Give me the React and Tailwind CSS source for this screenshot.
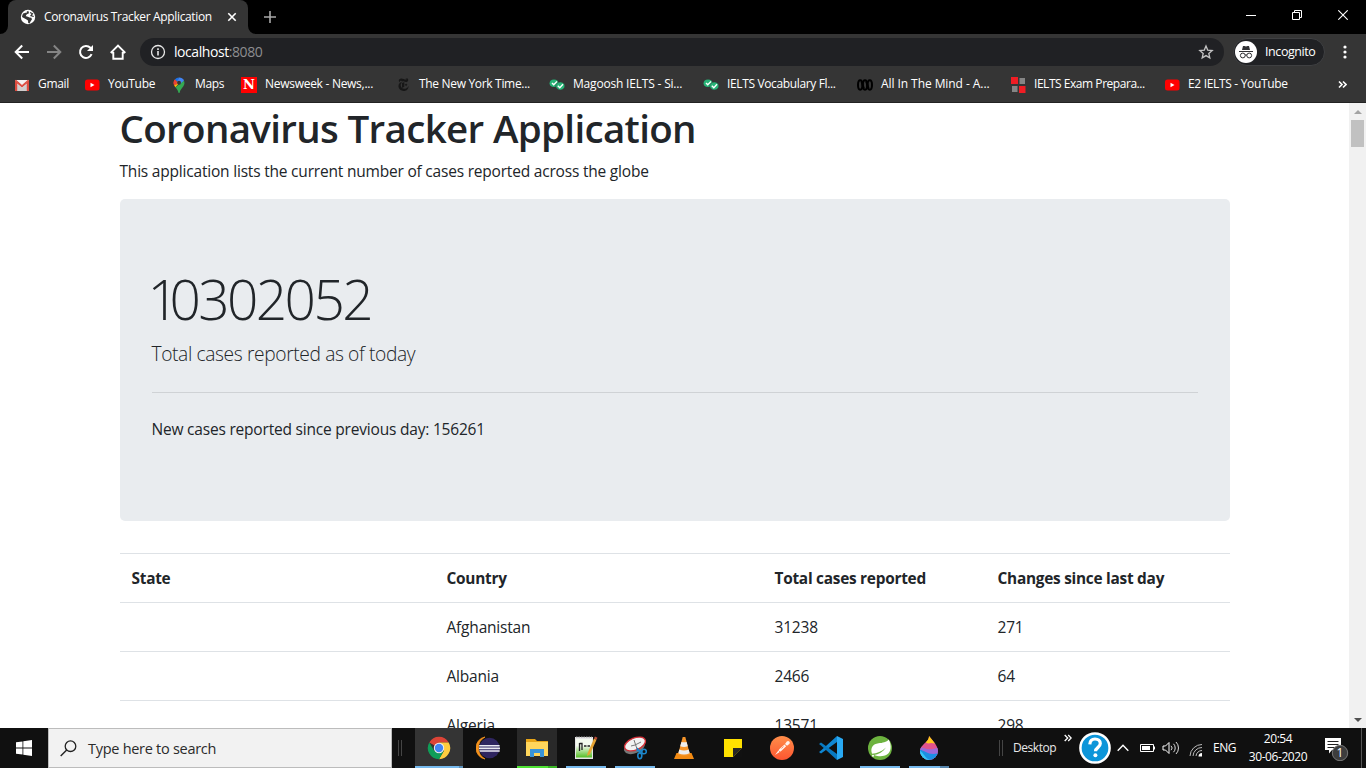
import React from 'react';
import { SiNewyorktimes } from 'react-icons/si';

const Svg = ({ s = 16, box = 16, children, className = '' }) => (
  <svg width={s} height={s} viewBox={`0 0 ${box} ${box}`} fill="none" className={`block shrink-0 ${className}`}>
    {children}
  </svg>
);

/* ---------- bookmark icons ---------- */
const Gmail = () => (
  <Svg>
    <path d="M1 3h14v11H1z" fill="#e8e6e6" />
    <path d="M3 14V7l5 4 5-4v7z" fill="#cfcdcd" />
    <path d="M1 14V3l7 6 7-6v11h-2.2V6.6L8 10.6 3.200 6.600V14z" fill="#dd4b3e" />
    <path d="M2 3h12L8 8z" fill="#f3f0f0" />
    <path d="M1 3.300l1-.5L8 8l6-5.200 1 .5-7 6.300z" fill="#dd4b3e" />
  </Svg>
);
const YouTube = () => (
  <Svg className="-ml-px">
    <rect x="1" y="2.500" width="14.500" height="11" rx="2.500" fill="#f00" />
    <path d="M6.500 5.800v4.400L10.500 8z" fill="#fff" />
  </Svg>
);
const Maps = () => (
  <Svg>
    <path d="M8 .5a5.400 5.400 0 0 0-4.200 2L6.500 5z" fill="#1a73e8" />
    <path d="M3.800 2.500a5.400 5.400 0 0 0-.9 5L6.300 7z" fill="#ea4335" />
    <path d="M8 .5a5.400 5.400 0 0 1 5 3.300L9.500 7.600 6 4.800z" fill="#4285f4" />
    <path d="M2.900 7.500c.3 1 .9 1.800 1.500 2.700L10 4.500 6 4.800z" fill="#fbbc04" />
    <path d="M13 3.800c1.200 3-.2 4.900-1.800 6.900C9.500 12.700 9 14 8.700 15.400c-.2.700-1.100.7-1.300 0C7 13.500 5.800 12 4.400 10.200z" fill="#34a853" />
    <path d="M3.800 2.500 6 4.500 5.800 7.500 3 8c-.9-2.200-.3-4.200.8-5.500z" fill="#ea4335" />
    <circle cx="8" cy="5.800" r="2" fill="#353535" />
  </Svg>
);
const Newsweek = () => (
  <div className="flex size-4 shrink-0 items-center justify-center bg-[#f00] font-['DejaVu_Serif','Liberation_Serif',serif] text-[13px] leading-4 font-bold text-white">N</div>
);
const Times = () => <SiNewyorktimes size={13} color="#171717" className="mx-[1.5px] shrink-0" />;
const Magoosh = () => (
  <Svg>
    <ellipse cx="5" cy="6.300" rx="4.400" ry="3.800" fill="#27b376" />
    <ellipse cx="11.300" cy="9" rx="4.500" ry="4" fill="#27b376" stroke="#353535" strokeWidth=".5" />
    <path d="m3 6 1.700 1.800L8 4.500M8.800 8.800l2 2 3.200-3.500" stroke="#fff" strokeWidth="1.300" />
  </Svg>
);
const Abc = () => (
  <Svg>
    <g stroke="#000" strokeWidth="2">
      <ellipse cx="3.200" cy="8" rx="2.200" ry="4.700" />
      <ellipse cx="8" cy="8" rx="2.200" ry="4.700" />
      <ellipse cx="12.800" cy="8" rx="2.200" ry="4.700" />
      <path d="m4.500 4.500 2.400 7M9.200 4.500l2.400 7" />
    </g>
  </Svg>
);
const IeltsPrep = () => (
  <Svg className="-ml-px">
    <path d="M1 0h7v7H1zM9 9h6.500v7H9z" fill="#f01d24" />
    <path d="M9.500 1H15v6H9.500zM2 9h5.500v6H2z" fill="#858585" />
  </Svg>
);

const bookmarks = [
  { w: 'w-[71px]', icon: <Gmail />, label: 'Gmail' },
  { w: 'w-[86px]', icon: <YouTube />, label: 'YouTube' },
  { w: 'w-[70px]', icon: <Maps />, label: 'Maps' },
  { w: 'w-[154px]', icon: <Newsweek />, label: 'Newsweek - News,...', t: 'tracking-[-0.28px]' },
  { w: 'w-[154px]', icon: <Times />, label: 'The New York Time...' },
  { w: 'w-[154px]', icon: <Magoosh />, label: 'Magoosh IELTS - Si...', t: 'tracking-[-0.19px]' },
  { w: 'w-[154px]', icon: <Magoosh />, label: 'IELTS Vocabulary Fl...', t: 'tracking-[-0.36px]' },
  { w: 'w-[154px]', icon: <Abc />, label: 'All In The Mind - A...', t: 'tracking-[-0.07px]' },
  { w: 'w-[154px]', icon: <IeltsPrep />, label: 'IELTS Exam Prepara...', t: 'tracking-[-0.46px]' },
  { w: 'w-[150px]', icon: <YouTube />, label: 'E2 IELTS - YouTube' },
];

/* ---------- browser frame ---------- */
const TabStrip = () => (
  <div className="flex h-[34px] shrink-0 items-end bg-black">
    <Svg s={8} box={8}><path d="M8 0v8H0a8 8 0 0 0 8-8z" fill="#353535" /></Svg>
    <div className="flex h-[34px] w-[240px] items-center rounded-t-lg bg-[#353535] pl-3 text-white">
      <Svg>
        <circle cx="8" cy="8" r="7.200" fill="#fff" />
        <path d="M8.300 1.800 9 4.300 6.800 5.200 5.500 7l2.300.7 1.700.8 1.800.2.700 1.500-1.300 2-1.200 2.200-1.300-.4-.2-2.500-1.500-1L2 8l.5-2.500z" fill="#353535" />
        <path d="M3.500 4.500 5.500 6 4 8.500M10 3.500l2.500 1.200-1.500 2 2.700.8" stroke="#353535" strokeWidth="1.200" />
        <path d="M6.300 4.200 5 3.200 7 2.400z" fill="#fff" />
      </Svg>
      <span className="ml-2 w-[183px] text-[12px] tracking-[-0.35px]">Coronavirus Tracker Application</span>
      <Svg s={10} box={10}><path d="m1.300 1.300 7.400 7.400m0-7.400L1.300 8.700" stroke="#fff" strokeWidth="1.600" /></Svg>
    </div>
    <Svg s={8} box={8}><path d="M0 0v8h8a8 8 0 0 1-8-8z" fill="#353535" /></Svg>
    <div className="flex h-[34px] flex-1 items-center pl-2">
      <Svg s={12} box={12}><path d="M6 0v12M0 6h12" stroke="#a8a8a8" strokeWidth="1.600" /></Svg>
    </div>
    <div className="flex h-[29px] items-center gap-9 self-start pr-[18px]">
      <Svg s={10} box={10}><path d="M0 5.500h10" stroke="#fff" /></Svg>
      <Svg s={10} box={10}><path d="M.5 2.500h7v7h-7zM2.500 2.500v-2h7v7h-2" stroke="#fff" /></Svg>
      <Svg s={10} box={10}><path d="m.3.3 9.400 9.400m0-9.400L.3 9.700" stroke="#fff" strokeWidth="1.100" /></Svg>
    </div>
  </div>
);

const Toolbar = () => (
  <div className="flex h-[34px] shrink-0 items-center bg-[#353535] pt-[2px] pl-[14px] text-white">
    <Svg><path d="M15 8H2m6.200-6.500L1.700 8l6.500 6.500" stroke="#fff" strokeWidth="2" /></Svg>
    <Svg className="ml-4"><path d="M1 8h13M7.800 1.500 14.300 8l-6.500 6.500" stroke="#858585" strokeWidth="2" /></Svg>
    <Svg className="ml-4"><path d="M13.600 10.200A6 6 0 1 1 12.400 3.800L14 5.400" stroke="#fff" strokeWidth="2" /><path d="M15 1v6H9z" fill="#fff" /></Svg>
    <Svg className="ml-4"><path d="M3.300 8v6.800h9.400V8M.7 8.800 8 1.500l7.300 7.300M1 8.500h2.500M12.500 8.500H15" stroke="#fff" strokeWidth="1.900" /></Svg>
    <div className="ml-[14px] flex h-7 w-[1084px] items-center rounded-full bg-[#202124] pr-[10px] pl-[10px]">
      <Svg><circle cx="8" cy="8" r="6.500" stroke="#e8e8e8" strokeWidth="1.300" /><path d="M8 7v4.500M8 4.300v1.600" stroke="#e8e8e8" strokeWidth="1.600" /></Svg>
      <span className="ml-2 flex-1 pb-px text-[14px] tracking-[-0.43px]">localhost<span className="text-[#8d8e90]">:8080</span></span>
      <Svg><path d="m8 1.900 1.700 4.200 4.500.4-3.400 3 1 4.400L8 11.600l-3.800 2.300 1-4.400-3.400-3 4.500-.4z" stroke="#c4c4c4" strokeWidth="1.300" /></Svg>
    </div>
    <div className="ml-[9px] flex h-7 w-[92px] items-center rounded-full border border-[#3f4042] bg-[#202124] pl-px">
      <Svg s={22} box={22}>
        <circle cx="11" cy="11" r="11" fill="#fff" />
        <path d="M7 9 8 5h1.500L11 5.500 12.500 5H14l1 4zM4 10h14v1H4z" fill="#303134" />
        <circle cx="7.800" cy="14.500" r="2.400" stroke="#303134" /><circle cx="14.200" cy="14.500" r="2.400" stroke="#303134" /><path d="M10 14h2" stroke="#303134" />
      </Svg>
      <span className="ml-[8px] text-[12.5px] tracking-[-0.42px]">Incognito</span>
    </div>
    <Svg className="ml-[12px]"><g fill="#fff"><circle cx="8" cy="3" r="1.600" /><circle cx="8" cy="8" r="1.600" /><circle cx="8" cy="13" r="1.600" /></g></Svg>
  </div>
);

const BookmarkBar = () => (
  <div className="flex h-[35px] shrink-0 items-center border-b border-[#232323] bg-[#353535] pb-px pl-[14px] text-[12px] text-white">
    {bookmarks.map((b, i) => (
      <div key={i} className={`flex shrink-0 items-center gap-2 whitespace-nowrap ${b.w}`}>
        {b.icon}
        <span className={`pb-px ${b.t || 'tracking-[-0.32px]'}`}>{b.label}</span>
      </div>
    ))}
    <Svg s={9} box={9} className="ml-[23px]"><path d="m1 1.500 3 3-3 3m4-6 3 3-3 3" stroke="#fff" strokeWidth="1.600" /></Svg>
  </div>
);

/* ---------- page ---------- */
const rows = [
  ['', 'Afghanistan', '31238', '271'],
  ['', 'Albania', '2466', '64'],
  ['', 'Algeria', '13571', '298'],
];

const Page = () => (
  <div className="flex min-h-0 flex-1 overflow-hidden bg-white">
    <main className="flex-1 pr-[119.5px] pl-[119.5px] text-[15.5px] leading-6 tracking-[-0.2px] text-[#212529]">
      <h1 className="mb-2 pt-0.5 text-[38.5px] leading-[46px] font-semibold tracking-[-0.66px] whitespace-nowrap">Coronavirus Tracker Application</h1>
      <p className="mb-4">This application lists the current number of cases reported across the globe</p>
      <section className="mb-8 h-[322px] rounded-[5px] bg-[#e9ecef] px-8 py-16">
        <h1 className="-ml-1 mb-2 h-[67px] text-[55px] leading-[71px] font-light"><span className="tracking-[-9.5px]">1</span><span className="tracking-[-2.6px]">0302052</span></h1>
        <p className="text-[19.2px] leading-[32px] font-light tracking-[-0.37px]">Total cases reported as of today</p>
        <hr className="mt-[22px] mb-6 border-t border-[#cfd2d5]" />
        <p>New cases reported since previous day: 156261</p>
      </section>
      <table className="w-[1110px] table-fixed border-collapse text-left">
        <colgroup>
          <col className="w-[315px]" /><col className="w-[328px]" /><col className="w-[223px]" /><col className="w-[244px]" />
        </colgroup>
        <thead>
          <tr className="h-[49px] border-t border-[#dee2e6] text-[15.4px] tracking-[-0.26px]">
            {['State', 'Country', 'Total cases reported', 'Changes since last day'].map((h) => (
              <th key={h} className="px-3 pt-0.5 font-bold">{h}</th>
            ))}
          </tr>
        </thead>
        <tbody>
          {rows.map((r) => (
            <tr key={r[1]} className="h-[49px] border-t border-[#dee2e6]">
              {r.map((c, i) => <td key={i} className="px-3">{c}</td>)}
            </tr>
          ))}
        </tbody>
      </table>
    </main>
    <div className="flex w-[17px] shrink-0 flex-col items-center bg-[#f1f1f1]">
      <div className="flex h-[17px] items-center"><Svg s={8} box={8}><path d="m0 6 4-4 4 4z" fill="#a3a3a3" /></Svg></div>
      <div className="h-[27px] w-[13px] bg-[#c1c1c1]" />
      <div className="mt-auto flex h-[17px] items-center"><Svg s={8} box={8}><path d="m0 2 4 4 4-4z" fill="#505050" /></Svg></div>
    </div>
  </div>
);

/* ---------- taskbar ---------- */
const Chrome = () => (
  <Svg s={24} box={24}>
    <path d="M12 12 2.300 6.400A11.200 11.200 0 0 1 21.700 6.400H12z" fill="#db4437" />
    <path d="M12 6.400h9.700A11.200 11.200 0 0 1 12 23.200l4.900-8.400z" fill="#ffcd40" />
    <path d="M2.300 6.400 7.200 14.800 12 17.600l4.900-2.800L12 23.200A11.200 11.200 0 0 1 2.300 6.400z" fill="#0f9d58" />
    <circle cx="12" cy="12" r="5.200" fill="#f1f1f1" /><circle cx="12" cy="12" r="4.200" fill="#4285f4" />
  </Svg>
);
const Eclipse = () => (
  <Svg s={24} box={24}>
    <path d="M9 1A11.200 11.200 0 0 0 9 23 12.500 12.500 0 0 1 9 1z" fill="#f7941e" stroke="#f7941e" strokeWidth=".8" />
    <circle cx="13.500" cy="12" r="10.300" fill="#2f2560" />
    <path d="M3.200 9h20.400v1.600H3zM3 11.600h21v1.600H3zM3.200 14.200h20.500V15.800H3.700z" fill="#eceaf3" />
  </Svg>
);
const Explorer = () => (
  <Svg s={24} box={24}>
    <path d="M1 3h9l2 2h11v5H1z" fill="#e8a517" /><path d="M1 6h22v14H1z" fill="#ffd65c" />
    <path d="M5 21v-8h14v8h-4v-4H9v4z" fill="#3994d8" />
  </Svg>
);
const Notepad = () => (
  <Svg s={24} box={24}>
    <defs><linearGradient id="np" x1="0" y1="0" x2="0" y2="1"><stop offset=".35" stopColor="#f4fbef" /><stop offset="1" stopColor="#55bd24" /></linearGradient></defs>
    <path d="M1 1h18v22H1z" fill="#e6e6e6" /><path d="M2 3h16v18.500H2z" fill="url(#np)" />
    <path d="M2 1h16" stroke="#999" strokeDasharray="1.500 1" />
    <path d="M5.500 7v8M5.500 7.500h2.500V14M10 10h2.500M13.500 10H16" stroke="#222" strokeWidth="1.300" />
    <path d="m13.500 17.500 6.500-15 2.500 1.200-6.500 14.500-3 1.800z" fill="#e6a434" /><path d="m20 2.500 1-2 2.500 1.200-1 2z" fill="#b94b36" />
  </Svg>
);
const Snip = () => (
  <Svg s={24} box={24}>
    <ellipse cx="11.500" cy="11" rx="11" ry="6.300" transform="rotate(-22 11.500 11)" fill="#777" />
    <ellipse cx="12" cy="8" rx="11" ry="6" transform="rotate(-22 12 8)" fill="#f3f3f3" stroke="#d32f37" strokeWidth="1.300" />
    <path d="m11 4 3 9M18 6l-6 3-4 1" stroke="#777" strokeWidth="1" />
    <path d="m14 12 3.500 5m-4-2.500 6 .5" stroke="#1c86cb" strokeWidth="1.500" />
    <circle cx="21" cy="15.500" r="2.300" stroke="#1c86cb" strokeWidth="1.600" /><ellipse cx="16.800" cy="19.800" rx="2" ry="2.900" stroke="#1c86cb" strokeWidth="1.600" />
  </Svg>
);
const Vlc = () => (
  <Svg s={24} box={24}>
    <path d="m4.500 17-2.500 6h20l-2.500-6z" fill="#f28a13" /><path d="M10.700 1h2.600L18 18.500a8 4 0 0 1-12 0z" fill="#f6952a" />
    <path d="m9.400 6-1.200 4.300a6 2.500 0 0 0 7.600 0L14.600 6a5 2 0 0 1-5.200 0zM7.300 13.500l-1 3.700a8 3.500 0 0 0 11.400 0l-1-3.700a7 3 0 0 1-9.400 0z" fill="#eee" />
  </Svg>
);
const Sticky = () => (
  <Svg s={24} box={24}><path d="M3 3h18v18H3z" fill="#ffe100" /><path d="M12 21v-9h9z" fill="#262626" /><path d="M12 21h9v-9z" fill="#111" /></Svg>
);
const Postman = () => (
  <Svg s={24} box={24}>
    <defs><linearGradient id="pm" x1="0" y1="0" x2="0" y2="1"><stop stopColor="#ff8e4a" /><stop offset="1" stopColor="#fd5530" /></linearGradient></defs>
    <circle cx="12" cy="12" r="12" fill="url(#pm)" />
    <path d="m5 19 4.500-6 5-4.500 1.700 1.700-5 4.800zM15 8l1.800-2.400A1.700 1.700 0 0 1 19.300 8L17 9.700z" fill="#fff3ed" />
    <path d="m8.500 14.500 1.500 1.500M11.500 12.500l2-2" stroke="#f96c3a" strokeWidth=".7" />
  </Svg>
);
const Code = () => (
  <Svg s={24} box={24}>
    <path d="m18 0-16 14.500L0 16l2 1.500L18 6z" fill="#0f87d3" />
    <path d="M18 24 2 9.500 0 8l2-1.500L18 18z" fill="#0879c1" />
    <path d="m18 0 6 3v18l-6 3z" fill="#29a9f3" />
  </Svg>
);
const Spring = () => (
  <Svg s={24} box={24}>
    <circle cx="12" cy="12" r="12" fill="#6db33f" />
    <path d="M20.800 3.400C24 10 23 16 19 18.500c-3.500 2.400-9 2-13 .5C10.500 18.500 15 16 18 11.500 13.500 15.500 9 17.500 4 17.800 2 11.500 5 8 10.500 7.200c4-.6 8-.8 10.300-3.800z" fill="#fff" />
    <circle cx="5" cy="19.700" r="1" fill="#fff" />
  </Svg>
);
const Paint = () => (
  <Svg s={24} box={24}>
    <defs><clipPath id="drop"><path d="M12 0c1.500 2 9 9.500 9 15a9 9 0 0 1-18 0C3 11 7 8 10 5c1.500-1.500 2-3.500 2-5z" /></clipPath></defs>
    <g clipPath="url(#drop)">
      <path d="M0 0h24v24H0z" fill="#e2538d" /><path d="M9 0h13v9q-6-3-11-1.500L8 6z" fill="#ffc91b" />
      <path d="M0 12c6-3 9 5 22-1v13H0z" fill="#9c69d8" /><path d="M0 14c7-2 10 7 22 3v10H0z" fill="#1b8fe3" />
      <path d="M0 14c6 0 7 8 13 10H0z" fill="#35c7f4" />
    </g>
  </Svg>
);

const apps = [
  { icon: <Chrome />, bg: 'bg-[#343434]', a: 'w-[44px] bg-[#76b9ed]', b: 'w-1 bg-[#5b90ba]' },
  { icon: <Eclipse />, bg: '' },
  { icon: <Explorer />, bg: 'bg-[#292929]', a: 'w-[31px] bg-[#4fe334]', b: 'w-[9px] bg-[#3ab526]', narrow: true },
  { icon: <Notepad />, bg: '', a: 'w-10 bg-[#76b9ed]' },
  { icon: <Snip />, bg: '', a: 'w-10 bg-[#76b9ed]' },
  { icon: <Vlc />, bg: '' },
  { icon: <Sticky />, bg: '' },
  { icon: <Postman />, bg: '' },
  { icon: <Code />, bg: '' },
  { icon: <Spring />, bg: '', a: 'w-10 bg-[#76b9ed]' },
  { icon: <Paint />, bg: '', a: 'w-[31px] bg-[#76b9ed]', b: 'w-[9px] bg-[#5786ad]' },
];

const Grip = ({ className }) => <div className={`h-4 w-1 border-x border-[#454545] ${className}`} />;

const Taskbar = () => (
  <div className="flex h-10 shrink-0 items-center bg-[#101010] text-white">
    <div className="flex w-12 justify-center">
      <Svg><path d="M0 2.300 6.500 1.400V7.500H0zM7.300 1.300 16 0v7.500H7.300zM0 8.400h6.500v6.200L0 13.700zM7.300 8.400H16V16l-8.700-1.300z" fill="#fff" /></Svg>
    </div>
    <div className="flex h-10 w-[344px] items-center border border-[#bcbcbc] bg-[#f2f2f2] pl-[11px] text-[#2b2b2b]">
      <Svg s={17} box={17}><circle cx="10.500" cy="6.200" r="5.300" stroke="#222" strokeWidth="1.300" /><path d="m6.700 10-6 6" stroke="#222" strokeWidth="1.400" /></Svg>
      <span className="ml-[11px] pt-0.5 text-[14.5px] tracking-[-0.28px]">Type here to search</span>
    </div>
    <Grip className="ml-1.5" />
    <div className="ml-[13px] flex h-10 gap-px">
      {apps.map((app, i) => (
        <div key={i} className={`flex h-10 w-12 flex-col items-center ${app.narrow ? '' : app.bg}`}>
          <div className={`flex h-[38px] items-center justify-center pt-0.5 ${app.narrow ? `w-10 ${app.bg}` : 'w-full'}`}>{app.icon}</div>
          <div className="flex h-0.5">{app.a && <div className={app.a} />}{app.b && <div className={app.b} />}</div>
        </div>
      ))}
    </div>
    <Grip className="ml-[46px]" />
    <span className="ml-[10px] w-[50px] text-[12px] tracking-[-0.45px] text-[#e8e8e8]">Desktop</span>
    <Svg s={8} box={8} className="mb-[21px] ml-px"><path d="m.7 1 3 3-3 3m3.500-6 3 3-3 3" stroke="#fff" strokeWidth="1.300" /></Svg>
    <Svg s={32} box={32} className="ml-[7px]">
      <circle cx="16" cy="16" r="14.600" fill="#0c95d9" stroke="#fff" strokeWidth="2.500" />
      <path d="M10.800 12.300C11 8.600 13 7 16 7c3.200 0 5.300 1.800 5.300 4.600 0 4-4.800 4-4.800 7.600" stroke="#fff" strokeWidth="3.200" /><circle cx="16.400" cy="23.300" r="2" fill="#fff" />
    </Svg>
    <Svg s={12} box={12} className="ml-[6px]"><path d="m.7 8.700 5.300-5.400 5.300 5.400" stroke="#fff" strokeWidth="1.400" /></Svg>
    <Svg s={16} box={16} className="ml-[11px]"><path d="M.5 4.500h13v7H.5z" stroke="#fff" /><path d="M2 6h8v4H2z" fill="#fff" /><path d="M14.500 6.500v3" stroke="#fff" /></Svg>
    <Svg s={18} box={18} className="ml-[6px]"><path d="M1 7h2.500L7 3.500v11L3.500 11H1z" stroke="#fff" /><path d="M9 6.800a3 3 0 0 1 0 4.400M11.500 4.800a6 6 0 0 1 0 8.400M14 3a8.500 8.500 0 0 1 0 12" stroke="#ddd" /></Svg>
    <Svg s={14} box={14} className="mt-1 ml-[9px]"><g stroke="#bbb"><path d="M1 13A12 12 0 0 1 13 1.500" /><path d="M4 13a9 9 0 0 1 9-8.500" /><path d="M7 13a6 6 0 0 1 6-5.500" /></g><path d="M9.500 13.500a3.500 3.500 0 0 1 3.500-3.500v3.500z" fill="#fff" /></Svg>
    <span className="ml-[10px] w-[34px] text-[12px] tracking-[-0.48px]">ENG</span>
    <div className="flex w-[62px] flex-col items-center text-[12px] leading-[18px] tracking-[-0.43px]">
      <span>20:54</span><span>30-06-2020</span>
    </div>
    <Svg s={26} box={26} className="ml-[15px]">
      <path d="M1 3h16v12H8l-3 3.500V15H1z" fill="#fff" /><path d="M3.500 6.500h11M3.500 9.500h11M3.500 12.500h7" stroke="#222" />
      <circle cx="16" cy="18" r="7.700" fill="#3d3d3d" stroke="#777" />
      <text x="16" y="22.300" textAnchor="middle" fill="#fff" fontSize="12" fontFamily="Open Sans, sans-serif">1</text>
    </Svg>
    <div className="ml-auto h-10 w-[5px] border-l border-[#555]" />
  </div>
);

export default function App() {
  return (
    <div className="flex h-[768px] w-[1366px] flex-col overflow-hidden bg-white font-['Open_Sans','Noto_Sans',sans-serif]">
      <TabStrip />
      <Toolbar />
      <BookmarkBar />
      <Page />
      <Taskbar />
    </div>
  );
}
